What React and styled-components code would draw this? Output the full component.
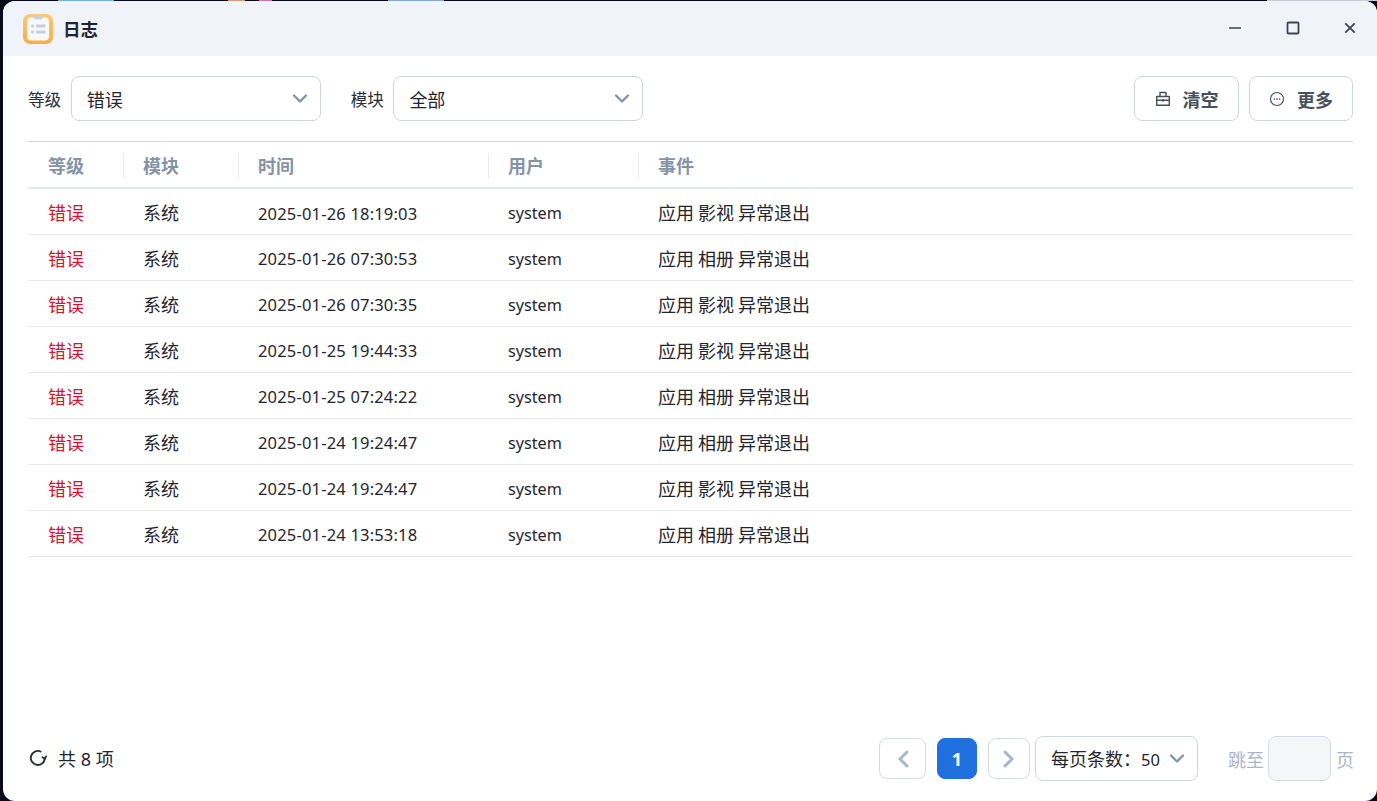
import React from "react";
import styled, { createGlobalStyle } from "styled-components";

const Global = createGlobalStyle`
  html, body { margin: 0; padding: 0; height: 100%; background: #070b18; overflow: hidden; }
  #root { height: 100%; }
  * { box-sizing: border-box; }
`;

const Desktop = styled.div`
  height: 801px;
  font-family: "Noto Sans", "Noto Sans CJK SC", sans-serif;
  color: #1f2630;
`;
const Strip = styled.div`
  height: 1px;
  display: flex;
`;
const StripPiece = styled.span`
  margin-left: ${(p) => p.$left}px;
  width: ${(p) => p.$width}px;
  background: ${(p) => p.$color};
`;
const Frame = styled.div`
  height: 800px;
  padding-left: 3px;
`;
const Win = styled.div`
  height: 800px;
  background: #fff;
  border-radius: 12px;
  overflow: hidden;
  display: flex;
  flex-direction: column;
`;
const TitleBar = styled.header`
  height: 55px;
  flex: none;
  background: #f0f3f8;
  display: flex;
  align-items: center;
  padding-left: 20px;
`;
const Title = styled.h1`
  margin: 0 0 0 10px;
  font-size: 17.5px;
  font-weight: 700;
  color: #1d2530;
  flex: 1;
`;
const WinControls = styled.div`
  display: flex;
  margin: 0 -2px 2px 0;
`;
const WinBtn = styled.button`
  width: 57.5px;
  height: 53px;
  padding: 0;
  border: 0;
  background: none;
  display: flex;
  align-items: center;
  justify-content: center;
  color: #3c4450;
`;
const Body = styled.main`
  flex: 1;
  display: flex;
  flex-direction: column;
  padding: 20px 24px 0 25px;
  min-height: 0;
`;
const Toolbar = styled.div`
  display: flex;
  align-items: center;
  height: 45px;
  flex: none;
`;
const FilterLabel = styled.label`
  font-size: 16.6px;
  margin-right: 9.5px;
  margin-left: ${(p) => p.$offset || 0}px;
  color: #2a3038;
`;
const Select = styled.div`
  width: ${(p) => p.$width}px;
  height: 45px;
  border: 1px solid #cfd5de;
  border-radius: 8px;
  display: flex;
  align-items: center;
  justify-content: space-between;
  padding: 0 11px 0 15px;
  font-size: 18px;
  background: #fff;
  color: #1f2630;
`;
const PageSizeText = styled.span`
  padding-bottom: 2px;
`;
const PageSize = styled.span`
  font-size: 16.5px;
`;
const Spacer = styled.div`
  flex: 1;
`;
const ActionBtn = styled.button`
  height: 45px;
  width: ${(p) => p.$width}px;
  margin-left: ${(p) => p.$offset || 0}px;
  border: 1px solid #cfd5de;
  border-radius: 8px;
  background: #fff;
  display: flex;
  align-items: center;
  justify-content: center;
  gap: 12px;
  font-family: inherit;
  font-size: 18px;
  font-weight: 700;
  color: #47505c;
  padding: 0;
`;
const Table = styled.table`
  margin-top: 20px;
  width: 100%;
  border-collapse: collapse;
  table-layout: fixed;
  border-top: 1px solid #d3d8df;
  flex: none;
`;
const Th = styled.th`
  width: ${(p) => (p.$width ? p.$width + "px" : "auto")};
  height: 46px;
  padding: 1px 0 0 20px;
  text-align: left;
  font-size: 18px;
  font-weight: 700;
  color: #8493a8;
  border-bottom: 2px solid #e3e8ee;
  position: relative;
  &:not(:first-child)::before {
    content: "";
    position: absolute;
    left: 0;
    top: 11px;
    height: 25px;
    width: 1px;
    background: #e8ecf1;
  }
`;
const Td = styled.td`
  height: 46px;
  padding: 0 0 0 20px;
  font-size: 18px;
  color: ${(p) => p.$color || "#1f2630"};
  border-bottom: 1px solid #e6e9ee;
  white-space: nowrap;
`;
const TimeCell = styled(Td)`
  font-size: 16.5px;
  letter-spacing: 0.18px;
  padding-top: 2px;
`;
const UserCell = styled(Td)`
  font-size: 16.2px;
  padding-top: 2px;
`;
const EventCell = styled(Td)`
  word-spacing: -0.7px;
`;
const Row = styled.tr`
  &:first-child td {
    height: 47px;
    padding-top: 2px;
  }
  &:first-child ${TimeCell}, &:first-child ${UserCell} {
    padding-top: 4px;
  }
`;
const Footer = styled.footer`
  margin: auto -1px 20px 0;
  height: 45px;
  flex: none;
  display: flex;
  align-items: center;
`;
const Total = styled.div`
  display: flex;
  align-items: center;
  gap: 11px;
  font-size: 18px;
  margin: 0 0 2px 1px;
  flex: 1;
`;
const PageBtn = styled.button`
  width: ${(p) => p.$width}px;
  height: 41px;
  margin-right: ${(p) => p.$gap}px;
  padding: 0;
  border-radius: 8px;
  border: 1px solid ${(p) => (p.$active ? "#2070e0" : "#d3d9e2")};
  background: ${(p) => (p.$active ? "#2070e0" : "#fff")};
  color: ${(p) => (p.$active ? "#fff" : "#a9b6c8")};
  font-family: inherit;
  font-size: 18px;
  font-weight: 700;
  display: flex;
  align-items: center;
  justify-content: center;
`;
const Jump = styled.span`
  font-size: 18px;
  color: #a9b6c8;
  margin-left: ${(p) => p.$left || 0}px;
`;
const JumpInput = styled.div`
  width: 63px;
  height: 45px;
  margin: 0 5px 0 4px;
  border: 1px solid #d6dbe3;
  border-radius: 8px;
  background: #f5f6f8;
`;

const rows = [
  ["2025-01-26 18:19:03", "影视"],
  ["2025-01-26 07:30:53", "相册"],
  ["2025-01-26 07:30:35", "影视"],
  ["2025-01-25 19:44:33", "影视"],
  ["2025-01-25 07:24:22", "相册"],
  ["2025-01-24 19:24:47", "相册"],
  ["2025-01-24 19:24:47", "影视"],
  ["2025-01-24 13:53:18", "相册"],
];

const Chevron = ({ color = "#8493a8" }) => (
  <svg width="18" height="18" viewBox="0 0 18 18" fill="none" stroke={color} strokeWidth="2.4" strokeLinecap="round" strokeLinejoin="round">
    <path d="M3 5.5 9 11.5 15 5.5" />
  </svg>
);

const AppIcon = () => (
  <svg width="30" height="30" viewBox="0 0 30 30">
    <defs>
      <linearGradient id="g" x1="0" y1="0" x2="0" y2="1">
        <stop offset="0" stopColor="#fcc878" />
        <stop offset="1" stopColor="#f9ac45" />
      </linearGradient>
    </defs>
    <rect width="30" height="30" rx="7" fill="url(#g)" />
    <rect x="4" y="3.5" width="22" height="23" rx="4" fill="#f6f9fb" />
    <rect x="10.5" y="1.5" width="9" height="4" rx="2" fill="#c9d3da" />
    <g fill="#c4d0dc">
      <rect x="8" y="10.5" width="3" height="3" rx="1" />
      <rect x="8" y="16.5" width="3" height="3" rx="1" />
      <rect x="13" y="10.5" width="9.5" height="3" rx="1" />
      <rect x="13" y="16.5" width="9.5" height="3" rx="1" />
    </g>
  </svg>
);

const Clear = () => (
  <svg width="16" height="16" viewBox="0 0 16 16" fill="none" stroke="#47505c" strokeWidth="1.4" strokeLinejoin="round">
    <path d="M5 5.5V1.5h6v4M1.7 5.5h12.6v8.8H1.7zM1.7 9.3h12.6M8 8v2.8" />
  </svg>
);

const More = () => (
  <svg width="16" height="16" viewBox="0 0 16 16" fill="none">
    <circle cx="8" cy="8" r="6.5" stroke="#47505c" strokeWidth="1.2" />
    <g fill="#47505c">
      <circle cx="5.4" cy="8" r=".85" />
      <circle cx="8" cy="8" r=".85" />
      <circle cx="10.6" cy="8" r=".85" />
    </g>
  </svg>
);

const Refresh = () => (
  <svg width="18" height="18" viewBox="0 0 18 18" fill="none" stroke="#2a3038" strokeWidth="1.9" strokeLinecap="round" strokeLinejoin="round">
    <path d="M15.8 9.4A7 7 0 1 1 11.6 2.5" />
    <path d="M13.6 8.2l2.2 1.5 1.3-2.3" />
  </svg>
);

const Pager = ({ dir }) => (
  <svg width="16" height="20" viewBox="0 0 16 20" fill="none" stroke="#a9b6c8" strokeWidth="3" strokeLinecap="round" strokeLinejoin="round">
    <path d={dir === "left" ? "M12 3 5 10l7 7" : "M4 3l7 7-7 7"} />
  </svg>
);

export default function App() {
  return (
    <Desktop>
      <Global />
      <Strip>
        <StripPiece $left={58} $width={56} $color="#6fb0e0" />
        <StripPiece $left={114} $width={17} $color="#d99a78" />
        <StripPiece $left={14} $width={13} $color="#d66fc0" />
        <StripPiece $left={116} $width={56} $color="#7fa8e0" />
        <StripPiece $left={823} $width={110} $color="#c9ced6" />
      </Strip>
      <Frame>
        <Win>
          <TitleBar>
            <AppIcon />
            <Title>日志</Title>
            <WinControls>
              <WinBtn aria-label="最小化">
                <svg width="14" height="14" viewBox="0 0 14 14" stroke="currentColor" strokeWidth="1.7"><path d="M1 7h12" /></svg>
              </WinBtn>
              <WinBtn aria-label="最大化">
                <svg width="14" height="14" viewBox="0 0 14 14" fill="none" stroke="currentColor" strokeWidth="1.8"><rect x="1.5" y="1.5" width="11" height="11" rx="1" /></svg>
              </WinBtn>
              <WinBtn aria-label="关闭">
                <svg width="14" height="14" viewBox="0 0 14 14" stroke="currentColor" strokeWidth="1.8"><path d="M2.3 2.3l9.4 9.4M11.7 2.3 2.3 11.7" /></svg>
              </WinBtn>
            </WinControls>
          </TitleBar>
          <Body>
            <Toolbar>
              <FilterLabel>等级</FilterLabel>
              <Select $width={250}>错误<Chevron /></Select>
              <FilterLabel $offset={30}>模块</FilterLabel>
              <Select $width={250}>全部<Chevron /></Select>
              <Spacer />
              <ActionBtn $width={105}><Clear />清空</ActionBtn>
              <ActionBtn $width={104} $offset={10}><More />更多</ActionBtn>
            </Toolbar>
            <Table>
              <thead>
                <tr>
                  <Th $width={95}>等级</Th>
                  <Th $width={115}>模块</Th>
                  <Th $width={250}>时间</Th>
                  <Th $width={150}>用户</Th>
                  <Th>事件</Th>
                </tr>
              </thead>
              <tbody>
                {rows.map(([time, app], i) => (
                  <Row key={i}>
                    <Td $color="#c9182f">错误</Td>
                    <Td>系统</Td>
                    <TimeCell>{time}</TimeCell>
                    <UserCell>system</UserCell>
                    <EventCell>应用 {app} 异常退出</EventCell>
                  </Row>
                ))}
              </tbody>
            </Table>
            <Footer>
              <Total><Refresh />共 8 项</Total>
              <PageBtn $width={47} $gap={11}><Pager dir="left" /></PageBtn>
              <PageBtn $width={40} $gap={11} $active>1</PageBtn>
              <PageBtn $width={42} $gap={5}><Pager dir="right" /></PageBtn>
              <Select $width={163}>
                <PageSizeText>每页条数：<PageSize>50</PageSize></PageSizeText>
                <Chevron />
              </Select>
              <Jump $left={30}>跳至</Jump>
              <JumpInput />
              <Jump>页</Jump>
            </Footer>
          </Body>
        </Win>
      </Frame>
    </Desktop>
  );
}
